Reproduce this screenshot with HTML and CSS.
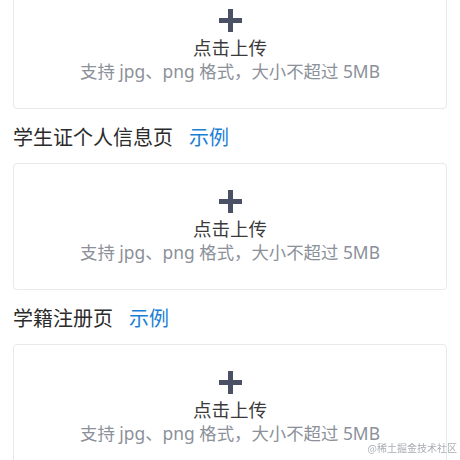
FILE: index.html
```html
<!DOCTYPE html>
<html lang="zh-CN">
<head>
<meta charset="utf-8">
<title>上传证件</title>
<link rel="stylesheet" href="styles.css">
</head>
<body>
<div class="page">
  <div class="upload first">
    <div class="plus"></div>
    <div class="label">点击上传</div>
    <div class="hint">支持 jpg、png 格式，大小不超过 5MB</div>
  </div>
  <div class="title">学生证个人信息页<span class="example">示例</span></div>
  <div class="upload">
    <div class="plus"></div>
    <div class="label">点击上传</div>
    <div class="hint">支持 jpg、png 格式，大小不超过 5MB</div>
  </div>
  <div class="title">学籍注册页<span class="example">示例</span></div>
  <div class="upload">
    <div class="plus"></div>
    <div class="label">点击上传</div>
    <div class="hint">支持 jpg、png 格式，大小不超过 5MB</div>
  </div>
</div>
<div class="watermark">@稀土掘金技术社区</div>
</body>
</html>
```

FILE: styles.css
```css
html, body {
  margin: 0;
  padding: 0;
  background: #ffffff;
  overflow: hidden;
  height: 460px;
}
body {
  font-family: "Noto Sans CJK SC", "Noto Sans", sans-serif;
  color: #333333;
}
.page {
  padding: 0 13px 0 13px;
  width: 434px;
}
.upload {
  box-sizing: border-box;
  height: 127px;
  border: 1px solid #e9e9eb;
  border-radius: 4px;
  padding-top: 26px;
  display: flex;
  flex-direction: column;
  align-items: center;
}
.upload.first {
  margin-top: -18px;
}
.plus {
  position: relative;
  width: 23px;
  height: 23px;
  margin-bottom: 3px;
}
.plus::before,
.plus::after {
  content: "";
  position: absolute;
  background: #4a5164;
}
.plus::before {
  left: 0;
  top: 9px;
  width: 23px;
  height: 5px;
}
.plus::after {
  left: 9px;
  top: 0;
  width: 5px;
  height: 23px;
}
.label {
  font-size: 18.5px;
  line-height: 24px;
  height: 24px;
  color: #3a3a3a;
}
.hint {
  font-family: "Noto Sans", "Noto Sans CJK SC", sans-serif;
  font-size: 17.4px;
  line-height: 24px;
  height: 24px;
  color: #8b9099;
}
.title {
  font-size: 20px;
  line-height: 28px;
  height: 28px;
  margin: 14px 0 12px 0;
  color: #2b2b2b;
}
.example {
  margin-left: 16px;
  color: #1b7fd6;
}
.watermark {
  position: fixed;
  right: 3px;
  bottom: 6px;
  font-family: "Noto Sans CJK SC", sans-serif;
  font-size: 10px;
  line-height: 12px;
  color: #a9adb3;
}
```
